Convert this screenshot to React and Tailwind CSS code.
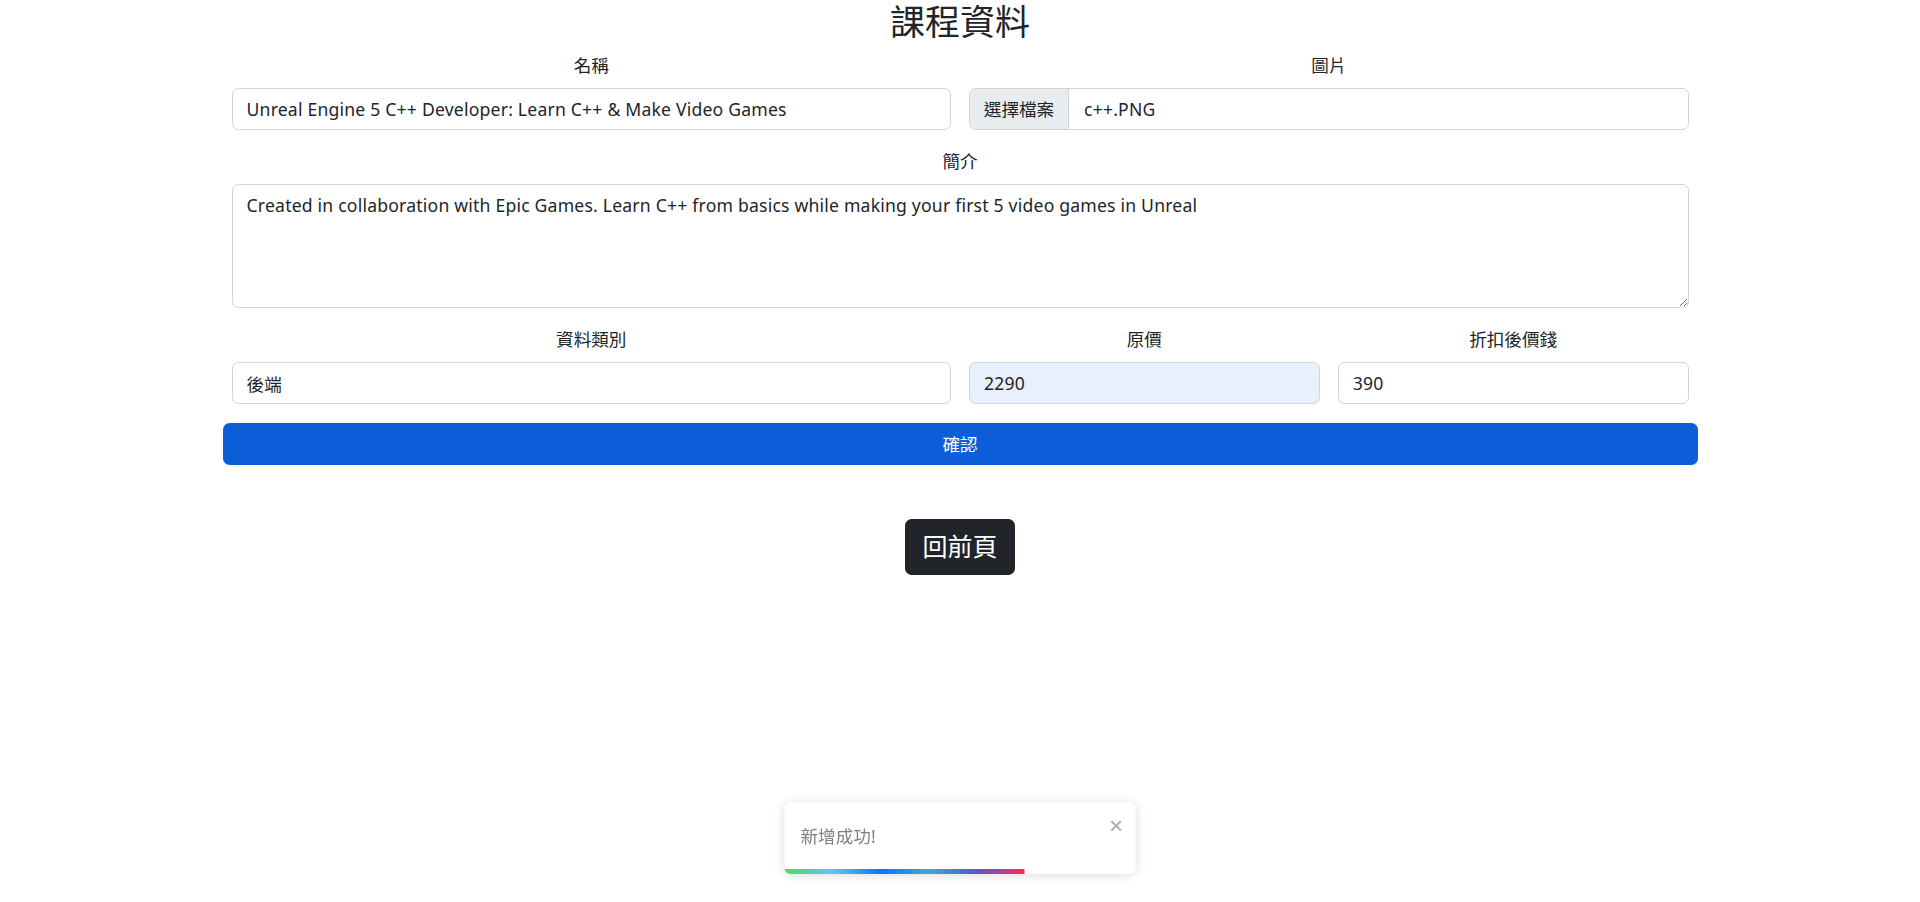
import { useState } from "react";

const FONT = "font-['Noto_Sans','Noto_Sans_CJK_TC',sans-serif]";

const inputCls =
  "block w-full h-[42px] px-[14px] text-[17.6px] leading-[26px] tracking-[0.2px] text-[#212529] border border-[#ced4da] rounded-[6.6px] outline-none";

function Label({ children }) {
  return <div className="h-[26px] leading-[26px] mb-[10px] text-center text-[17.6px] text-[#212529]">{children}</div>;
}

function CloseIcon() {
  return (
    <svg viewBox="0 0 14 16" className="w-[15px] h-[17px]" fill="currentColor">
      <path d="M7.71 8.23l3.75 3.75-1.48 1.48-3.75-3.75-3.75 3.75L1 11.98l3.75-3.75L1 4.48 2.48 3l3.75 3.75L9.98 3l1.48 1.48-3.75 3.75z" />
    </svg>
  );
}

export default function App() {
  const [form] = useState({
    name: "Unreal Engine 5 C++ Developer: Learn C++ & Make Video Games",
    file: "c++.PNG",
    intro: "Created in collaboration with Epic Games. Learn C++ from basics while making your first 5 video games in Unreal",
    category: "後端",
    price: "2290",
    discount: "390",
  });

  return (
    <div className={`${FONT} min-h-[902px] bg-white text-[#212529]`}>
      <div className="w-[1475px] mx-auto pt-[1px]">
        <h2 className="h-[42px] leading-[42px] mb-[9px] text-center text-[35px] font-normal">課程資料</h2>

        <div className="grid grid-cols-2">
          <div className="px-[9px]">
            <Label>名稱</Label>
            <input className={inputCls} readOnly value={form.name} />
          </div>
          <div className="px-[9px]">
            <Label>圖片</Label>
            <div className="flex h-[42px] border border-[#ced4da] rounded-[6.6px] overflow-hidden text-[17.6px]">
              <div className="w-[99px] flex items-center justify-center bg-[#e9ecef] border-r border-[#ced4da]">選擇檔案</div>
              <div className="flex items-center pl-[15px] tracking-[0.2px]">{form.file}</div>
            </div>
          </div>
        </div>

        <div className="px-[9px] mt-[18px]">
          <Label>簡介</Label>
          <textarea
            className="block w-full h-[124px] px-[14px] py-[7px] text-[17.6px] leading-[26px] tracking-[0.2px] text-[#212529] border border-[#ced4da] rounded-[6.6px] outline-none"
            readOnly
            value={form.intro}
          />
        </div>

        <div className="grid grid-cols-4 mt-[18px]">
          <div className="col-span-2 px-[9px]">
            <Label>資料類別</Label>
            <input className={inputCls} readOnly value={form.category} />
          </div>
          <div className="px-[9px]">
            <Label>原價</Label>
            <input className={`${inputCls} bg-[#e8f0fe]`} readOnly value={form.price} />
          </div>
          <div className="px-[9px]">
            <Label>折扣後價錢</Label>
            <input className={inputCls} readOnly value={form.discount} />
          </div>
        </div>

        <button className="mt-[19px] w-full h-[42px] rounded-[6.6px] bg-[#0b5ed7] text-white text-[17.6px]">確認</button>

        <div className="flex justify-center mt-[54px]">
          <button className="h-[56px] px-[17px] rounded-[6.6px] bg-[#212529] text-white text-[25px]">回前頁</button>
        </div>
      </div>

      <div className="fixed bottom-[28px] left-1/2 -translate-x-1/2 w-[351px] h-[72px] bg-white rounded-[6px] overflow-hidden shadow-[0_1px_11px_0_rgba(0,0,0,0.1),0_2px_16px_0_rgba(0,0,0,0.05)] flex items-center pl-[16px] pb-[3px]">
        <span className="text-[17.6px] text-[#808080]">新增成功!</span>
        <span className="absolute top-[15px] right-[11px] text-black/30">
          <CloseIcon />
        </span>
        <div className="absolute left-0 bottom-0 h-[5.5px] w-[240px] bg-[linear-gradient(to_right,#4cd964,#5ac8fa,#007aff,#34aadc,#5856d6,#ff2d55)]" />
      </div>
    </div>
  );
}
